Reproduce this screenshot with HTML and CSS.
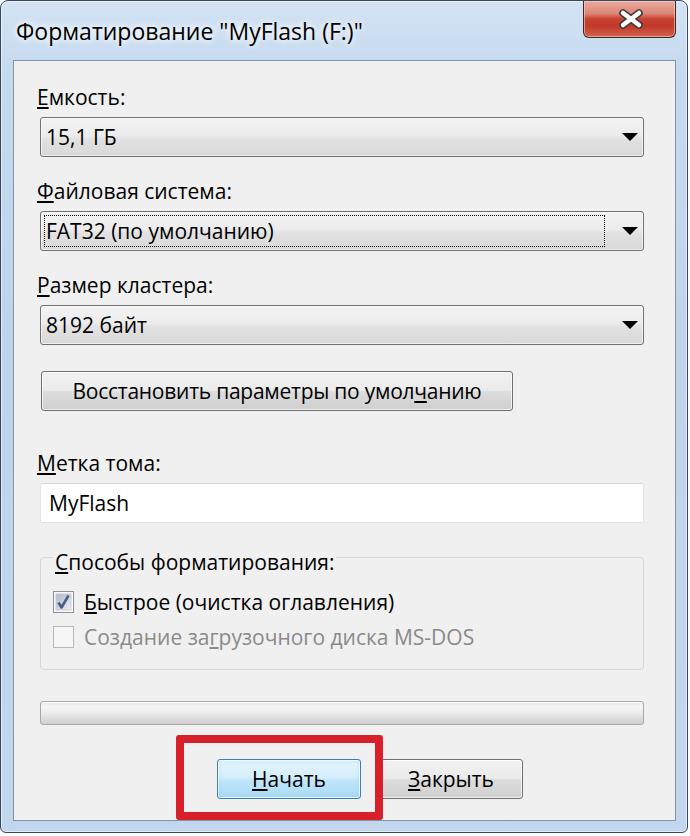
FILE: index.html
```html
<!DOCTYPE html>
<html lang="ru">
<head>
<meta charset="utf-8">
<title>Форматирование</title>
<link rel="stylesheet" href="styles.css">
</head>
<body>
<div class="window">
  <div class="titlebar">
    <div class="title">Форматирование "MyFlash (F:)"</div>
    <div class="close">
      <svg width="26" height="20" viewBox="0 0 26 20">
        <g stroke-linecap="round">
          <line x1="5" y1="4" x2="21" y2="16" stroke="#3b3b3b" stroke-width="7.5"/>
          <line x1="21" y1="4" x2="5" y2="16" stroke="#3b3b3b" stroke-width="7.5"/>
          <line x1="5" y1="4" x2="21" y2="16" stroke="#ffffff" stroke-width="4.5"/>
          <line x1="21" y1="4" x2="5" y2="16" stroke="#ffffff" stroke-width="4.5"/>
        </g>
      </svg>
    </div>
  </div>
  <div class="panel">
    <div class="label"><u>Е</u>мкость:</div>
    <div class="select">
      <div class="select-value">15,1 ГБ</div>
      <span class="arrow"></span>
    </div>

    <div class="label"><u>Ф</u>айловая система:</div>
    <div class="select">
      <div class="select-value focused">FAT32 (по умолчанию)</div>
      <span class="arrow"></span>
    </div>

    <div class="label"><u>Р</u>азмер кластера:</div>
    <div class="select">
      <div class="select-value">8192 байт</div>
      <span class="arrow"></span>
    </div>

    <div class="btn btn-wide">Восстановить параметры по умол<u>ч</u>анию</div>

    <div class="label label-after-btn"><u>М</u>етка тома:</div>
    <div class="textbox">MyFlash</div>

    <fieldset class="group">
      <legend class="group-title"><u>С</u>пособы форматирования:</legend>
      <div class="check-row">
        <span class="checkbox checked">
          <svg width="19" height="20" viewBox="0 0 19 20">
            <defs>
              <linearGradient id="cb" x1="0" y1="0" x2="1" y2="1">
                <stop offset="0" stop-color="#aeb7c6"/>
                <stop offset="1" stop-color="#eef0f4"/>
              </linearGradient>
            </defs>
            <rect x="2" y="2" width="15" height="16" fill="url(#cb)" stroke="#c7ccd6" stroke-width="1"/>
            <path d="M4.5 10.5 L7.5 15.5 L14.5 3.5" fill="none" stroke="#4a5e8c" stroke-width="2.6" stroke-linejoin="round"/>
          </svg>
        </span>
        <span class="check-text"><u>Б</u>ыстрое (очистка оглавления)</span>
      </div>
      <div class="check-row disabled">
        <span class="checkbox"></span>
        <span class="check-text">Создание за<u>г</u>рузочного диска MS-DOS</span>
      </div>
    </fieldset>

    <div class="progress"></div>

    <div class="actions">
      <div class="btn btn-action btn-default"><u>Н</u>ачать</div>
      <div class="btn btn-action"><u>З</u>акрыть</div>
      <div class="highlight"></div>
    </div>
  </div>
</div>
</body>
</html>
```

FILE: styles.css
```css
html, body {
  margin: 0;
  padding: 0;
  background: #ffffff;
}

body {
  font-family: "Open Sans", "Noto Sans", "DejaVu Sans", sans-serif;
  font-size: 21px;
  color: #000;
}

u {
  text-decoration: underline;
  text-decoration-thickness: 2px;
  text-underline-offset: 2px;
}

.window {
  width: 688px;
  box-sizing: border-box;
  border: 1px solid #34475c;
  border-radius: 8px 8px 6px 6px;
  background: linear-gradient(180deg, #d3e3f4 0%, #c6daef 8%, #bfd4eb 40%, #c2d7ed 100%);
  box-shadow: inset 0 0 0 1px rgba(255, 255, 255, 0.55);
  padding: 0 11px 11px 12px;
}

.titlebar {
  height: 59px;
  display: flex;
  justify-content: space-between;
  align-items: flex-start;
}

.title {
  padding: 17px 0 0 3px;
  line-height: 26px;
  font-size: 23px;
  color: #000;
  text-shadow: 0 0 6px #ffffff, 0 0 10px #ffffff;
}

.close {
  width: 93px;
  height: 37px;
  box-sizing: border-box;
  border: 1px solid #3e2623;
  border-top: none;
  border-radius: 0 0 6px 6px;
  background: linear-gradient(180deg, #e9aa9c 0%, #dc8676 35%, #c8402f 50%, #c2392a 70%, #d3634f 100%);
  box-shadow: inset 0 0 0 1px rgba(255, 220, 210, 0.55);
  display: flex;
  align-items: center;
  justify-content: center;
  padding-left: 3px;
}

.panel {
  background: #f0f0f0;
  border: 1px solid #7f94ab;
  padding: 24px 31px 21px 26px;
  display: flex;
  flex-direction: column;
}

.label {
  line-height: 24px;
  margin-bottom: 8px;
  padding-left: 11px;
  margin-left: -14px;
}

.select {
  height: 40px;
  box-sizing: border-box;
  border: 1px solid #707070;
  border-radius: 3px;
  background: linear-gradient(180deg, #f3f3f3 0%, #ececec 45%, #e2e2e2 55%, #d8d8d8 100%);
  box-shadow: inset 0 0 0 1px rgba(255, 255, 255, 0.6);
  padding: 3px 5px 3px 3px;
  display: flex;
  align-items: center;
  margin-bottom: 22px;
}

.select-value {
  flex: 1;
  height: 32px;
  box-sizing: border-box;
  border: 1px dotted transparent;
  line-height: 30px;
  padding-left: 1px;
  margin-right: 17px;
}

.select-value.focused {
  border: 1px dotted #000;
}

.arrow {
  width: 0;
  height: 0;
  border-left: 8px solid transparent;
  border-right: 8px solid transparent;
  border-top: 8px solid #000;
}

.btn {
  height: 40px;
  box-sizing: border-box;
  border: 1px solid #707070;
  border-radius: 3px;
  background: linear-gradient(180deg, #f2f2f2 0%, #ebebeb 48%, #dddddd 52%, #cfcfcf 100%);
  box-shadow: inset 0 0 0 1px rgba(255, 255, 255, 0.7);
  display: flex;
  align-items: center;
  justify-content: center;
  line-height: 24px;
}

.btn-wide {
  width: 472px;
  margin-left: 1px;
  margin-top: 4px;
  margin-bottom: 40px;
  padding-bottom: 1px;
  letter-spacing: -0.25px;
}

.textbox {
  height: 40px;
  box-sizing: border-box;
  border: 1px solid #e1e3e8;
  border-top-color: #d3d6dc;
  border-radius: 2px;
  background: #ffffff;
  line-height: 38px;
  padding-left: 8px;
}

.group {
  margin: 17px 0 0 0;
  padding: 16px 12px 20px 12px;
  border: 1px solid #d2d8df;
  border-radius: 4px;
  min-inline-size: 0;
  display: flex;
  flex-direction: column;
  gap: 11px;
}

.group-title {
  padding: 10px 2px 0 2px;
  line-height: 24px;
}

.check-row {
  display: flex;
  align-items: center;
  gap: 10px;
  height: 24px;
}

.checkbox {
  width: 21px;
  height: 22px;
  box-sizing: border-box;
  border: 1px solid #8e8f8f;
  background: linear-gradient(135deg, #f4f4f4, #ffffff);
  display: flex;
  align-items: center;
  justify-content: center;
  flex: none;
}

.checkbox svg {
  display: block;
}

.check-row.disabled .checkbox {
  border-color: #b8b8b8;
  background: #f6f6f6;
}

.check-row.disabled .check-text {
  color: #8a8a8a;
}

.check-text {
  line-height: 24px;
}

.progress {
  margin-top: 31px;
  height: 24px;
  box-sizing: border-box;
  border: 1px solid #a9a9a9;
  border-radius: 3px;
  background: linear-gradient(180deg, #e4e4e4 0%, #f6f6f6 20%, #ececec 50%, #dcdcdc 75%, #cfcfcf 100%);
  box-shadow: inset 0 1px 0 #ffffff;
}

.actions {
  position: relative;
  margin-top: 34px;
  display: flex;
  gap: 18px;
  padding-left: 177px;
}

.btn-action {
  width: 144px;
  padding-bottom: 1px;
}

.btn-default {
  border-color: #3c7fb1;
  background: linear-gradient(180deg, #e6f5fd 0%, #d4eefb 45%, #bfe5fa 55%, #a9daf5 100%);
  box-shadow: inset 0 0 0 1px rgba(255, 255, 255, 0.75), inset 0 0 4px rgba(120, 200, 240, 0.6);
}

.highlight {
  position: absolute;
  left: 136px;
  top: -24px;
  width: 207px;
  height: 85px;
  box-sizing: border-box;
  border: 8px solid #d8202b;
  border-radius: 3px;
  pointer-events: none;
}
```
